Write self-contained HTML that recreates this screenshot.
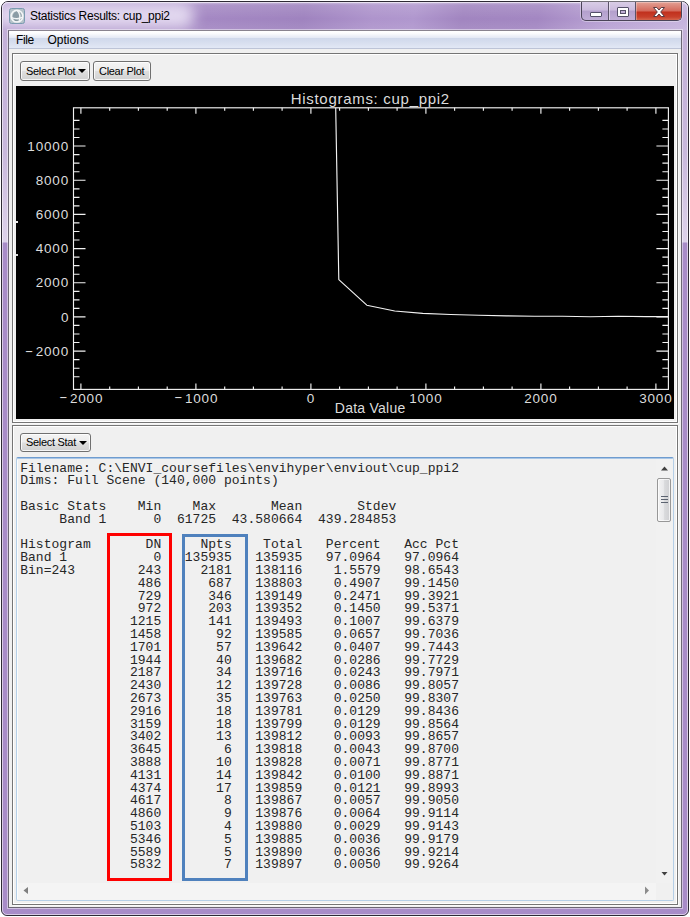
<!DOCTYPE html>
<html lang="en">
<head>
<meta charset="utf-8">
<title>Statistics Results: cup_ppi2</title>
<style>
html,body{margin:0;padding:0;background:#fff;}
body{width:690px;height:917px;position:relative;overflow:hidden;font-family:"Liberation Sans",sans-serif;}
.abs{position:absolute;box-sizing:border-box;}
#win{left:1px;top:1px;width:688px;height:915px;border:1px solid #2e2a35;border-radius:7px 7px 6px 6px;
 background:linear-gradient(to bottom,#dccfe9 0px,#cfbfe0 18px,#c3b0d8 30px,#c9b8dc 150px,#ddd2ea 240px,#a88cc8 241px,#a88cc8 100%);}
#winhl{left:2px;top:2px;width:686px;height:913px;border:1px solid rgba(255,255,255,.55);border-radius:6px 6px 5px 5px;}
#titlefill{left:2px;top:2px;width:686px;height:28px;border-radius:6px 6px 0 0;overflow:hidden;background:linear-gradient(to bottom,rgba(255,255,255,.45) 0,rgba(255,255,255,.12) 3px,rgba(255,255,255,0) 60%,rgba(255,255,255,.08) 100%),linear-gradient(100deg,#a68ac5 0,#a488c3 30%,#9f83bf 44%,#ae94cc 54%,#b097ce 60%,#a185c0 67%,#a387c2 78%,#b9a2d4 88%,#c6b4dd 100%);}
#glow{left:-8px;top:0px;width:200px;height:27px;border-radius:12px;background:#e2d8ef;filter:blur(7px);}
#bframe{left:3px;top:908px;width:684px;height:7px;background:#a88cc8;border-radius:0 0 5px 5px;}
#title{left:30px;top:8px;font-size:12px;line-height:16px;color:#000;white-space:nowrap;letter-spacing:-.25px;}
#client{left:8px;top:30px;width:674px;height:878px;border:1px solid #6b6674;border-top-color:#89838f;background:#f0f0f0;box-shadow:0 0 0 1px rgba(255,255,255,.45);}
#menubar{left:9px;top:31px;width:672px;height:18px;background:linear-gradient(to bottom,#ffffff 0,#fdfdfe 2px,#edf0f8 5px,#e6eaf5 6.5px,#cfd8eb 7px,#d8dfef 12px,#e2e8f5 17px);border-bottom:1px solid #bdc4d7;}
.mi{top:33px;font-size:12px;line-height:15px;color:#000;white-space:nowrap;}
.panel{border:1px solid #757575;box-shadow:inset 0 0 0 1px #fff, 1px 1px 0 #fafafa;background:#f0f0f0;}
.btn{border:1px solid #707070;border-radius:3px;background:linear-gradient(to bottom,#f4f4f4 0,#ececec 48%,#dedede 52%,#d1d1d1 100%);box-shadow:inset 0 0 0 1px rgba(255,255,255,.8);font-size:11px;line-height:18px;color:#000;white-space:nowrap;padding-left:5px;letter-spacing:-.3px;}
.arr{width:0;height:0;border-left:4px solid transparent;border-right:4px solid transparent;border-top:4px solid #000;}
#plot{left:16px;top:86px;width:658px;height:333px;background:#000;}
svg{position:absolute;left:0;top:0;}
.pl text{font-family:"Liberation Sans",sans-serif;font-size:13.5px;fill:#dcdcdc;}
#ta{left:16px;top:457px;width:658px;height:444px;border:1px solid #b5cfe7;border-top-color:#6f9ccf;background:#f0f0f0;box-shadow:inset 0 1px 0 #a9c6e6, inset 0 0 0 1px #fafcfd;border-radius:2px;}
pre{margin:0;position:absolute;left:20.2px;top:462.6px;font-family:"Liberation Mono",monospace;font-size:13px;line-height:12.8px;letter-spacing:.035px;color:#262626;white-space:pre;}
.box{border:3px solid;}
#vsb{left:656px;top:459px;width:17px;height:424px;background:#f1f1f1;}
#hsb{left:18px;top:883px;width:638px;height:17px;background:#f4f4f4;}
#corner{left:656px;top:883px;width:17px;height:17px;background:#f0f0f0;}
#thumb{left:657px;top:478px;width:14px;height:44px;border:1px solid #979797;border-radius:2px;background:linear-gradient(to right,#f3f3f3 0,#e9e9eb 45%,#d9dadc 55%,#cfcfd2 100%);box-shadow:inset 0 0 0 1px rgba(255,255,255,.7);}
.grip{left:660.5px;width:7px;height:1px;background:#5c6370;}
</style>
</head>
<body>
<div id="win" class="abs"></div>
<div id="titlefill" class="abs"><div id="glow" class="abs"></div></div>
<div id="bframe" class="abs"></div>
<div id="winhl" class="abs"></div>

<!-- title icon -->
<svg class="abs" style="left:9px;top:8px" width="16" height="16" viewBox="0 0 16 16">
 <rect x="0.5" y="0.5" width="15" height="15" rx="2" fill="#b4c2c9" stroke="#7a9ab0"/>
 <circle cx="8" cy="8.2" r="5.9" fill="#c9d2d6"/>
 <path d="M3.6 9.6C3.6 5.6 5.6 3.6 8 3.1C10 4.2 11 6.6 10.9 9.4C8.4 10.4 5.8 10.4 3.6 9.6Z" fill="#8b9ca5"/>
 <path d="M4.6 11.6C6.6 12.6 9 12.6 10.6 11.7" fill="none" stroke="#82949d" stroke-width="1.2"/>
 <path d="M11.2 4.2C12.3 6 12.6 9 11.6 11.6" fill="none" stroke="#8b9ca5" stroke-width="1"/>
 <circle cx="8" cy="8.2" r="5.9" fill="none" stroke="#f4f6f7" stroke-width="1.5"/>
 <path d="M2.4 9.4C5 10.9 10.6 10.9 13.6 9" fill="none" stroke="#f4f6f7" stroke-width="1.2"/>
 <path d="M8 2.6C10.6 4.4 11.8 9 10 13.6" fill="none" stroke="#f4f6f7" stroke-width="1.2"/>
</svg>
<div id="title" class="abs">Statistics Results: cup_ppi2</div>

<!-- caption buttons -->
<div class="abs" id="capbtns" style="left:581px;top:2px;width:101px;height:19px;border:1px solid #4b4458;border-top:none;border-radius:0 0 5px 5px;overflow:hidden;background:linear-gradient(to bottom,#d9cde6 0,#cbbbdd 45%,#b39fcc 50%,#c0add6 100%);box-shadow:0 0 0 1px rgba(255,255,255,.35);">
  <div class="abs" style="left:26px;top:0;width:1px;height:20px;background:#5a5268;"></div>
  <div class="abs" style="left:27px;top:0;width:1px;height:20px;background:rgba(255,255,255,.45);"></div>
  <div class="abs" style="left:53px;top:0;width:1px;height:20px;background:#5a5268;"></div>
  <div class="abs" style="left:54px;top:0;width:46px;height:20px;background:linear-gradient(to bottom,#e3a195 0,#d4695a 45%,#c1301d 50%,#c8402b 75%,#dc7f63 100%);box-shadow:inset 0 0 0 1px rgba(255,255,255,.3);"></div>
  <!-- minimize glyph -->
  <div class="abs" style="left:8px;top:10px;width:12px;height:5px;background:#fff;border:1px solid #55506a;border-radius:1px;"></div>
  <!-- maximize glyph -->
  <div class="abs" style="left:35px;top:5px;width:12px;height:10px;border:1px solid #55506a;background:#fff;border-radius:1px;"></div>
  <div class="abs" style="left:38px;top:8px;width:6px;height:4px;border:1px solid #55506a;background:#bfaed6;"></div>
  <!-- close glyph -->
  <svg class="abs" style="left:70px;top:4px" width="14" height="12" viewBox="0 0 14 12"><path d="M1.5 1.5H4.8L7 4L9.2 1.5H12.5L8.7 6L12.5 10.5H9.2L7 8L4.8 10.5H1.5L5.3 6Z" fill="#fff" stroke="#5a3a40" stroke-width="1" stroke-linejoin="round"/></svg>
</div>

<div id="client" class="abs"></div>
<div id="menubar" class="abs"></div>
<div class="abs mi" style="left:16px;letter-spacing:-.4px;">File</div>
<div class="abs mi" style="left:47.5px;">Options</div>

<!-- top panel -->
<div class="abs panel" style="left:12px;top:53px;width:666px;height:370px;"></div>
<div class="abs btn" style="left:20px;top:61px;width:70px;height:20px;">Select Plot</div>
<div class="abs arr" style="left:78px;top:69px;"></div>
<div class="abs btn" style="left:93px;top:61px;width:58px;height:20px;">Clear Plot</div>
<div id="plot" class="abs"></div>
<div class="abs" style="left:16px;top:221px;width:2px;height:2px;background:#eee;"></div>
<div class="abs" style="left:16px;top:254px;width:2px;height:2px;background:#ddd;"></div>
<svg width="690" height="917" viewBox="0 0 690 917">
<rect x="73.5" y="107.8" width="594.9" height="281.6" stroke="#f2f2f2" stroke-width="1.15" fill="none"/>
<path d="M80.9 389.4V383.4M80.9 107.8V113.8M109.7 389.4V386.4M109.7 107.8V110.8M138.4 389.4V386.4M138.4 107.8V110.8M167.2 389.4V386.4M167.2 107.8V110.8M195.9 389.4V383.4M195.9 107.8V113.8M224.7 389.4V386.4M224.7 107.8V110.8M253.4 389.4V386.4M253.4 107.8V110.8M282.1 389.4V386.4M282.1 107.8V110.8M310.9 389.4V383.4M310.9 107.8V113.8M339.6 389.4V386.4M339.6 107.8V110.8M368.4 389.4V386.4M368.4 107.8V110.8M397.1 389.4V386.4M397.1 107.8V110.8M425.9 389.4V383.4M425.9 107.8V113.8M454.6 389.4V386.4M454.6 107.8V110.8M483.4 389.4V386.4M483.4 107.8V110.8M512.1 389.4V386.4M512.1 107.8V110.8M540.9 389.4V383.4M540.9 107.8V113.8M569.6 389.4V386.4M569.6 107.8V110.8M598.4 389.4V386.4M598.4 107.8V110.8M627.1 389.4V386.4M627.1 107.8V110.8M655.9 389.4V383.4M655.9 107.8V113.8M73.5 376.7H79.5M668.4 376.7H662.4M73.5 368.2H79.5M668.4 368.2H662.4M73.5 359.6H79.5M668.4 359.6H662.4M73.5 351.1H85.5M668.4 351.1H656.4M73.5 342.5H79.5M668.4 342.5H662.4M73.5 334.0H79.5M668.4 334.0H662.4M73.5 325.4H79.5M668.4 325.4H662.4M73.5 316.9H85.5M668.4 316.9H656.4M73.5 308.4H79.5M668.4 308.4H662.4M73.5 299.8H79.5M668.4 299.8H662.4M73.5 291.3H79.5M668.4 291.3H662.4M73.5 282.7H85.5M668.4 282.7H656.4M73.5 274.2H79.5M668.4 274.2H662.4M73.5 265.6H79.5M668.4 265.6H662.4M73.5 257.1H79.5M668.4 257.1H662.4M73.5 248.6H85.5M668.4 248.6H656.4M73.5 240.0H79.5M668.4 240.0H662.4M73.5 231.5H79.5M668.4 231.5H662.4M73.5 222.9H79.5M668.4 222.9H662.4M73.5 214.4H85.5M668.4 214.4H656.4M73.5 205.8H79.5M668.4 205.8H662.4M73.5 197.3H79.5M668.4 197.3H662.4M73.5 188.8H79.5M668.4 188.8H662.4M73.5 180.2H85.5M668.4 180.2H656.4M73.5 171.7H79.5M668.4 171.7H662.4M73.5 163.1H79.5M668.4 163.1H662.4M73.5 154.6H79.5M668.4 154.6H662.4M73.5 146.0H85.5M668.4 146.0H656.4M73.5 137.5H79.5M668.4 137.5H662.4M73.5 129.0H79.5M668.4 129.0H662.4M73.5 120.4H79.5M668.4 120.4H662.4" stroke="#f2f2f2" stroke-width="1.15" fill="none"/>
<polyline points="335.7,107.8 338.8,279.6 366.8,305.2 394.7,311.0 422.7,313.4 450.6,314.5 478.6,315.3 506.5,315.9 534.5,316.2 562.4,316.3 590.4,316.7 618.3,316.3 646.2,316.6 668.4,316.6" stroke="#f2f2f2" stroke-width="1.15" fill="none" stroke-linejoin="round"/>
<g class="pl"><text x="59.0" y="402.6"><tspan dy="-1.2" textLength="8.6" lengthAdjust="spacingAndGlyphs">-</tspan><tspan x="69.9" dy="1.2" textLength="32.5">2000</tspan></text><text x="174.0" y="402.6"><tspan dy="-1.2" textLength="8.6" lengthAdjust="spacingAndGlyphs">-</tspan><tspan x="184.9" dy="1.2" textLength="32.5">1000</tspan></text><text x="306.8" y="402.6">0</text><text x="409.2" y="402.6" textLength="32.5">1000</text><text x="524.2" y="402.6" textLength="32.5">2000</text><text x="639.2" y="402.6" textLength="32.5">3000</text><text x="24.8" y="355.7"><tspan dy="-1.2" textLength="8.6" lengthAdjust="spacingAndGlyphs">-</tspan><tspan x="35.7" dy="1.2" textLength="32.5">2000</tspan></text><text x="61.0" y="321.5">0</text><text x="35.7" y="287.3" textLength="32.5">2000</text><text x="35.7" y="253.2" textLength="32.5">4000</text><text x="35.7" y="219.0" textLength="32.5">6000</text><text x="35.7" y="184.8" textLength="32.5">8000</text><text x="27.3" y="150.6" textLength="40.9">10000</text><text x="290.7" y="103.5" textLength="158.5" style="font-size:15px">Histograms: cup_ppi2</text><text x="334.8" y="413.3" textLength="70.5" style="font-size:14px">Data Value</text></g>
</svg>

<!-- bottom panel -->
<div class="abs panel" style="left:12px;top:425px;width:666px;height:480px;"></div>
<div class="abs btn" style="left:20px;top:433px;width:71px;height:19px;line-height:17px;">Select Stat</div>
<div class="abs arr" style="left:79px;top:441px;"></div>
<div id="ta" class="abs"></div>
<pre>Filename: C:\ENVI_coursefiles\envihyper\enviout\cup_ppi2
Dims: Full Scene (140,000 points)

Basic Stats    Min    Max       Mean       Stdev
     Band 1      0  61725  43.580664  439.284853

Histogram       DN     Npts    Total   Percent   Acc Pct
Band 1           0   135935   135935   97.0964   97.0964
Bin=243        243     2181   138116    1.5579   98.6543
               486      687   138803    0.4907   99.1450
               729      346   139149    0.2471   99.3921
               972      203   139352    0.1450   99.5371
              1215      141   139493    0.1007   99.6379
              1458       92   139585    0.0657   99.7036
              1701       57   139642    0.0407   99.7443
              1944       40   139682    0.0286   99.7729
              2187       34   139716    0.0243   99.7971
              2430       12   139728    0.0086   99.8057
              2673       35   139763    0.0250   99.8307
              2916       18   139781    0.0129   99.8436
              3159       18   139799    0.0129   99.8564
              3402       13   139812    0.0093   99.8657
              3645        6   139818    0.0043   99.8700
              3888       10   139828    0.0071   99.8771
              4131       14   139842    0.0100   99.8871
              4374       17   139859    0.0121   99.8993
              4617        8   139867    0.0057   99.9050
              4860        9   139876    0.0064   99.9114
              5103        4   139880    0.0029   99.9143
              5346        5   139885    0.0036   99.9179
              5589        5   139890    0.0036   99.9214
              5832        7   139897    0.0050   99.9264</pre>
<div class="abs box" style="left:107px;top:533px;width:65px;height:348px;border-color:#fe0000;"></div>
<div class="abs box" style="left:182px;top:534px;width:66px;height:347px;border-color:#4f81bd;"></div>

<!-- scrollbars -->
<div id="vsb" class="abs"></div>
<div id="hsb" class="abs"></div>
<div id="corner" class="abs"></div>
<div id="thumb" class="abs"></div>
<div class="abs grip" style="top:496px;"></div>
<div class="abs grip" style="top:499px;"></div>
<div class="abs grip" style="top:502px;"></div>
<svg width="690" height="917" viewBox="0 0 690 917">
 <path d="M661 470.5L664.5 466.5L668 470.5Z" fill="#404040"/>
 <path d="M661.5 872L664.5 875.5L667.5 872Z" fill="#404040"/>
 <path d="M28 887L23.5 890.5L28 894Z" fill="#7f7f7f"/>
 <path d="M645 886.5L649 890.5L645 894.5Z" fill="#8c8c8c"/>
</svg>
</body>
</html>
